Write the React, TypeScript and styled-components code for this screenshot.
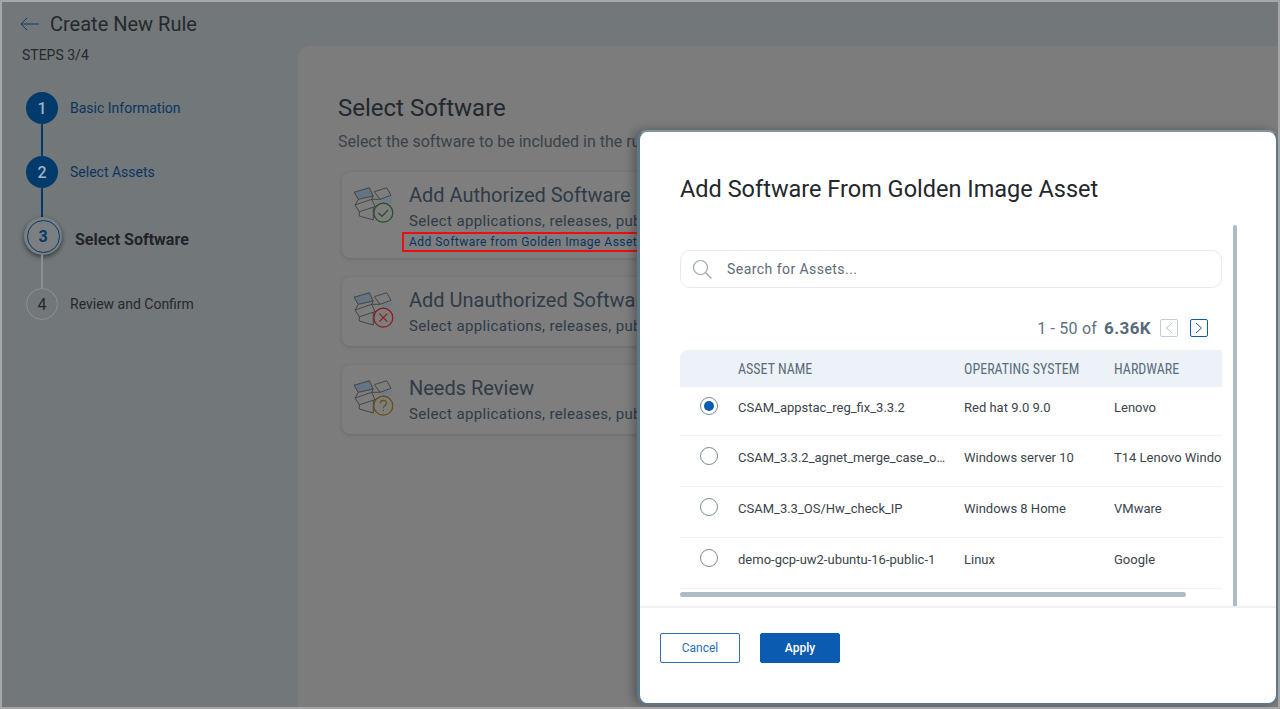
import styled, { createGlobalStyle } from 'styled-components';

const GlobalStyle = createGlobalStyle`
  html, body {
    margin: 0;
    padding: 0;
    background: #a6a6a6;
    font-family: Roboto, "Liberation Sans", sans-serif;
  }
  * { box-sizing: border-box; }
`;

const Frame = styled.div`
  position: relative;
  width: 1280px;
  height: 709px;
  border: 2px solid #a6a6a6;
  background: #72777a;
  overflow: hidden;
`;

const Header = styled.header`
  display: flex;
  align-items: center;
  gap: 10px;
  height: 44px;
  padding: 0 0 1px 18px;
`;

const Title = styled.h1`
  margin: 0;
  font-size: 20px;
  font-weight: 400;
  color: #26292c;
`;

const Body = styled.div`
  display: flex;
  height: 663px;
`;

const Sidebar = styled.aside`
  width: 296px;
  flex-shrink: 0;
  padding-left: 20px;
`;

const StepsLabel = styled.div`
  font-size: 14px;
  line-height: 18px;
  color: #26292c;
`;

const Stepper = styled.div`
  display: flex;
  flex-direction: column;
  margin: 28px 0 0 4px;
`;

const StepRow = styled.div`
  display: flex;
  align-items: center;
  height: 32px;
`;

const ActiveRow = styled(StepRow)`
  height: 38px;
  margin-left: -2px;
`;

const StepCircle = styled.div<{ $done?: boolean }>`
  width: 32px;
  height: 32px;
  border-radius: 50%;
  display: flex;
  align-items: center;
  justify-content: center;
  font-size: 16px;
  font-weight: ${p => (p.$done ? 500 : 400)};
  background: ${p => (p.$done ? '#023a6c' : 'transparent')};
  color: ${p => (p.$done ? '#9fb3c4' : '#26292c')};
  border: ${p => (p.$done ? 'none' : '1px solid #8b9094')};
`;

const ActiveCircle = styled.div`
  width: 38px;
  height: 38px;
  flex-shrink: 0;
  border-radius: 50%;
  background: #7b7f82;
  box-shadow: 0 2px 5px rgba(0, 0, 0, 0.55);
  display: flex;
  align-items: center;
  justify-content: center;
  span {
    width: 33px;
    height: 33px;
    border-radius: 50%;
    border: 1px solid #023a6c;
    display: flex;
    align-items: center;
    justify-content: center;
    color: #023a6c;
    font-size: 16px;
    font-weight: 700;
  }
`;

const StepText = styled.span<{ $done?: boolean }>`
  margin-left: 12px;
  font-size: 14px;
  color: ${p => (p.$done ? '#0b355e' : '#26292c')};
`;

const ActiveText = styled.span`
  margin-left: 13px;
  margin-top: 6px;
  font-size: 16px;
  font-weight: 700;
  color: #212427;
`;

const Connector = styled.div<{ $done?: boolean; $h: number }>`
  width: 2px;
  height: ${p => p.$h}px;
  margin-left: 15px;
  background: ${p => (p.$done ? '#023a6c' : '#8b9094')};
`;

const Main = styled.main`
  flex: 1;
  background: #7c7c7c;
  border-top-left-radius: 12px;
  padding: 48px 0 0 40px;
  overflow: hidden;
`;

const MainTitle = styled.h2`
  margin: 0;
  font-size: 24px;
  line-height: 28px;
  font-weight: 400;
  color: #22282e;
`;

const MainSub = styled.p`
  margin: 10px 0 20px;
  font-size: 16px;
  line-height: 20px;
  white-space: nowrap;
  color: #3a4249;
`;

const CardList = styled.div`
  display: flex;
  flex-direction: column;
  gap: 19px;
  margin-left: 4px;
  width: 880px;
`;

const Card = styled.div<{ $h: number }>`
  display: flex;
  gap: 15px;
  height: ${p => p.$h}px;
  padding: 11px 0 0 12px;
  background: #7e7e7e;
  border-radius: 8px;
  box-shadow: 0 1px 4px rgba(0, 0, 0, 0.14);
`;

const CardText = styled.div`
  display: flex;
  flex-direction: column;
  white-space: nowrap;
`;

const CardTitle = styled.div`
  font-size: 20px;
  line-height: 24px;
  color: #2f3b47;
`;

const CardDesc = styled.div`
  font-size: 15px;
  line-height: 20px;
  margin-top: 4px;
  letter-spacing: 0.35px;
  color: #2f3b47;
`;

const GoldenLink = styled.a`
  display: inline-block;
  margin: 1px 0 0 -7px;
  padding: 0 5px;
  width: 238px;
  height: 20px;
  border: 2px solid #e90f12;
  font-size: 12px;
  line-height: 16px;
  letter-spacing: 0.47px;
  color: #083564;
  white-space: nowrap;
  overflow: hidden;
`;

const BoxSvg = styled.svg`
  flex-shrink: 0;
  margin-top: 4px;
`;

const Modal = styled.section`
  position: absolute;
  left: 635px;
  top: 128px;
  width: 641px;
  height: 575px;
  background: #fff;
  border: 2px solid #5d7888;
  border-left-width: 3px;
  border-top-color: #7f97a5;
  border-radius: 10px;
  box-shadow: -4px 0 10px rgba(0, 0, 0, 0.28);
  display: flex;
  flex-direction: column;
`;

const ModalBody = styled.div`
  position: relative;
  height: 476px;
  padding: 43px 0 0 40px;
  border-bottom: 2px solid #f0f1f2;
`;

const ModalTitle = styled.h3`
  margin: 0;
  font-size: 23.5px;
  line-height: 28px;
  font-weight: 400;
  color: #23272b;
`;

const ScrollThumbY = styled.div`
  position: absolute;
  top: 93px;
  right: 39px;
  bottom: 0;
  width: 4px;
  border-radius: 2px 2px 0 0;
  background: #aebcc6;
`;

const Content = styled.div`
  width: 542px;
`;

const SearchBox = styled.div`
  display: flex;
  align-items: center;
  gap: 15px;
  height: 38px;
  margin-top: 47px;
  padding-left: 11px;
  border: 1px solid #e7eaec;
  border-radius: 10px;
  font-size: 14px;
  letter-spacing: 0.45px;
  color: #5e6b76;
`;

const Pager = styled.div`
  display: flex;
  align-items: center;
  justify-content: flex-end;
  height: 26px;
  margin-top: 27px;
  padding-right: 14px;
  font-size: 16px;
  letter-spacing: 0.2px;
  color: #5e717f;
  b {
    margin: 0 9px 0 7px;
    font-size: 17px;
    letter-spacing: 0.4px;
    font-weight: 700;
    color: #566a79;
  }
`;

const PageBtn = styled.button<{ $on?: boolean }>`
  width: 18px;
  height: 18px;
  padding: 0;
  margin-left: ${p => (p.$on ? '12px' : '0')};
  display: flex;
  align-items: center;
  justify-content: center;
  background: #fff;
  border: 1px solid ${p => (p.$on ? '#0b5cb0' : '#c3ccd3')};
  border-radius: 2px;
`;

const TableWrap = styled.div`
  margin-top: 9px;
  overflow: hidden;
`;

const Row = styled.div`
  display: grid;
  grid-template-columns: 58px 226px 150px 200px;
  width: 634px;
  align-items: center;
`;

const HeadRow = styled(Row)`
  height: 37px;
  background: #edf2f8;
  border-radius: 8px 8px 0 0;
  font-family: "Roboto Condensed", "Liberation Sans Narrow", Roboto, sans-serif;
  font-size: 14px;
  color: #5a6d7c;
`;

const BodyRow = styled(Row)`
  height: 51px;
  padding-bottom: 10px;
  border-bottom: 1px solid #f1f3f5;
  font-size: 13px;
  color: #3b444c;
`;

const FirstRow = styled(BodyRow)`
  height: 49px;
`;

const Cell = styled.div`
  white-space: nowrap;
  overflow: hidden;
  text-overflow: ellipsis;
  padding: 2px 14px 0 0;
`;

const Radio = styled.span<{ $on?: boolean }>`
  width: 18px;
  height: 18px;
  margin-left: 20px;
  border-radius: 50%;
  border: 1px solid #7a8b98;
  display: flex;
  align-items: center;
  justify-content: center;
  &::after {
    content: '';
    width: 10px;
    height: 10px;
    border-radius: 50%;
    background: ${p => (p.$on ? '#0b5cb0' : 'transparent')};
  }
`;

const ScrollThumbX = styled.div`
  width: 506px;
  height: 5px;
  margin-top: 3px;
  border-radius: 3px;
  background: #aebcc6;
`;

const Footer = styled.div`
  display: flex;
  gap: 20px;
  padding: 25px 0 0 20px;
`;

const Button = styled.button<{ $primary?: boolean }>`
  width: 80px;
  height: 30px;
  border-radius: 2px;
  font-family: Roboto, sans-serif;
  font-size: 12px;
  font-weight: ${p => (p.$primary ? 500 : 400)};
  background: ${p => (p.$primary ? '#0b5cb0' : '#fff')};
  color: ${p => (p.$primary ? '#fff' : '#2a6db5')};
  border: 1px solid ${p => (p.$primary ? '#0b5cb0' : '#2a6db5')};
`;

type Status = 'ok' | 'bad' | 'review';

const statusColor: Record<Status, string> = {
  ok: '#274f27',
  bad: '#8f1a1a',
  review: '#6b4e10',
};

const BoxIcon = ({ status }: { status: Status }) => {
  const c = statusColor[status];
  return (
    <BoxSvg width="40" height="38" viewBox="0 0 40 38" fill="none">
      <path d="M26 12.300 37 8.300l2 7-6 2z" fill="#717b85" />
      <path d="M0 5.300 15.300.7l4 8.300-15 3.300z" fill="#667380" stroke="#35393d" strokeWidth=".8" />
      <path d="M20.300 4.700 32.700.7 37 8.300 26 12.300z" stroke="#35393d" strokeWidth=".8" />
      <path d="M4.300 12.300 1 18M19.300 9 17.700 12.300M26 12.300 17.700 12.300" stroke="#35393d" strokeWidth=".8" />
      <path d="M1 18 17.700 12.300 21 19.700 5.300 24.700z" stroke="#35393d" strokeWidth=".8" />
      <path d="M5.300 24.700V29L19.300 33V20M21 19.700l9-3.700" stroke="#35393d" strokeWidth=".8" />
      <circle cx="29.300" cy="25.700" r="9.500" fill="#7e7e7e" stroke={c} strokeWidth="1.200" />
      {status === 'ok' && <path d="M24.500 26l3.500 3.500 6-6.500" stroke={c} strokeWidth="1.200" />}
      {status === 'bad' && <path d="M25.300 21.700l8 8M33.300 21.700l-8 8" stroke={c} strokeWidth="1.200" />}
      {status === 'review' && (
        <>
          <path d="M26.300 23.500c0-4 6.200-4 6.200-.3 0 2.500-3.200 2.300-3.200 5" stroke={c} strokeWidth="1.200" />
          <circle cx="29.300" cy="30.500" r=".8" fill={c} />
        </>
      )}
    </BoxSvg>
  );
};

const Chevron = ({ left, color }: { left?: boolean; color: string }) => (
  <svg width="10" height="12" viewBox="0 0 10 12" fill="none">
    <path d={left ? 'M8 1 2.500 6 8 11' : 'M2 1l5.500 5L2 11'} stroke={color} strokeWidth="1" />
  </svg>
);

const assets = [
  ['CSAM_3.3.2_agnet_merge_case_only_for_testing', 'Windows server 10', 'T14 Lenovo Windows Laptop'],
  ['CSAM_3.3_OS/Hw_check_IP', 'Windows 8 Home', 'VMware'],
  ['demo-gcp-uw2-ubuntu-16-public-1', 'Linux', 'Google'],
];

const DESC = 'Select applications, releases, publishers and versions to be included in the rule';

const App = () => {
  return (
    <>
      <GlobalStyle />
      <Frame>
        <Header>
          <svg width="20" height="14" viewBox="0 0 20 14" fill="none">
            <path d="M19 7H1M7 1 1 7l6 6" stroke="#0f3c68" strokeWidth="1" />
          </svg>
          <Title>Create New Rule</Title>
        </Header>
        <Body>
          <Sidebar>
            <StepsLabel>STEPS 3/4</StepsLabel>
            <Stepper>
              <StepRow>
                <StepCircle $done>1</StepCircle>
                <StepText $done>Basic Information</StepText>
              </StepRow>
              <Connector $done $h={32} />
              <StepRow>
                <StepCircle $done>2</StepCircle>
                <StepText $done>Select Assets</StepText>
              </StepRow>
              <Connector $done $h={29} />
              <ActiveRow>
                <ActiveCircle>
                  <span>3</span>
                </ActiveCircle>
                <ActiveText>Select Software</ActiveText>
              </ActiveRow>
              <Connector $h={33} />
              <StepRow>
                <StepCircle>4</StepCircle>
                <StepText>Review and Confirm</StepText>
              </StepRow>
            </Stepper>
          </Sidebar>
          <Main>
            <MainTitle>Select Software</MainTitle>
            <MainSub>Select the software to be included in the rule and how it should be treated</MainSub>
            <CardList>
              <Card $h={86}>
                <BoxIcon status="ok" />
                <CardText>
                  <CardTitle>Add Authorized Software</CardTitle>
                  <CardDesc>{DESC}</CardDesc>
                  <GoldenLink>Add Software from Golden Image Asset</GoldenLink>
                </CardText>
              </Card>
              <Card $h={69}>
                <BoxIcon status="bad" />
                <CardText>
                  <CardTitle>Add Unauthorized Software</CardTitle>
                  <CardDesc>{DESC}</CardDesc>
                </CardText>
              </Card>
              <Card $h={69}>
                <BoxIcon status="review" />
                <CardText>
                  <CardTitle>Needs Review</CardTitle>
                  <CardDesc>{DESC}</CardDesc>
                </CardText>
              </Card>
            </CardList>
          </Main>
        </Body>
        <Modal>
          <ModalBody>
            <ModalTitle>Add Software From Golden Image Asset</ModalTitle>
            <ScrollThumbY />
            <Content>
              <SearchBox>
                <svg width="20" height="20" viewBox="0 0 20 20" fill="none">
                  <circle cx="8.500" cy="8.500" r="7" stroke="#9aa7b1" strokeWidth="1.200" />
                  <path d="m13.500 13.500 6 6" stroke="#9aa7b1" strokeWidth="1.200" />
                </svg>
                Search for Assets...
              </SearchBox>
              <Pager>
                1 - 50 of <b>6.36K</b>
                <PageBtn>
                  <Chevron left color="#aebcc6" />
                </PageBtn>
                <PageBtn $on>
                  <Chevron color="#0b5cb0" />
                </PageBtn>
              </Pager>
              <TableWrap>
                <HeadRow>
                  <span />
                  <span>ASSET NAME</span>
                  <span>OPERATING SYSTEM</span>
                  <span>HARDWARE</span>
                </HeadRow>
                <FirstRow>
                  <Radio $on />
                  <Cell>CSAM_appstac_reg_fix_3.3.2</Cell>
                  <Cell>Red hat 9.0 9.0</Cell>
                  <Cell>Lenovo</Cell>
                </FirstRow>
                {assets.map(a => (
                  <BodyRow key={a[0]}>
                    <Radio />
                    <Cell>{a[0]}</Cell>
                    <Cell>{a[1]}</Cell>
                    <Cell>{a[2]}</Cell>
                  </BodyRow>
                ))}
              </TableWrap>
              <ScrollThumbX />
            </Content>
          </ModalBody>
          <Footer>
            <Button>Cancel</Button>
            <Button $primary>Apply</Button>
          </Footer>
        </Modal>
      </Frame>
    </>
  );
};

export default App;
